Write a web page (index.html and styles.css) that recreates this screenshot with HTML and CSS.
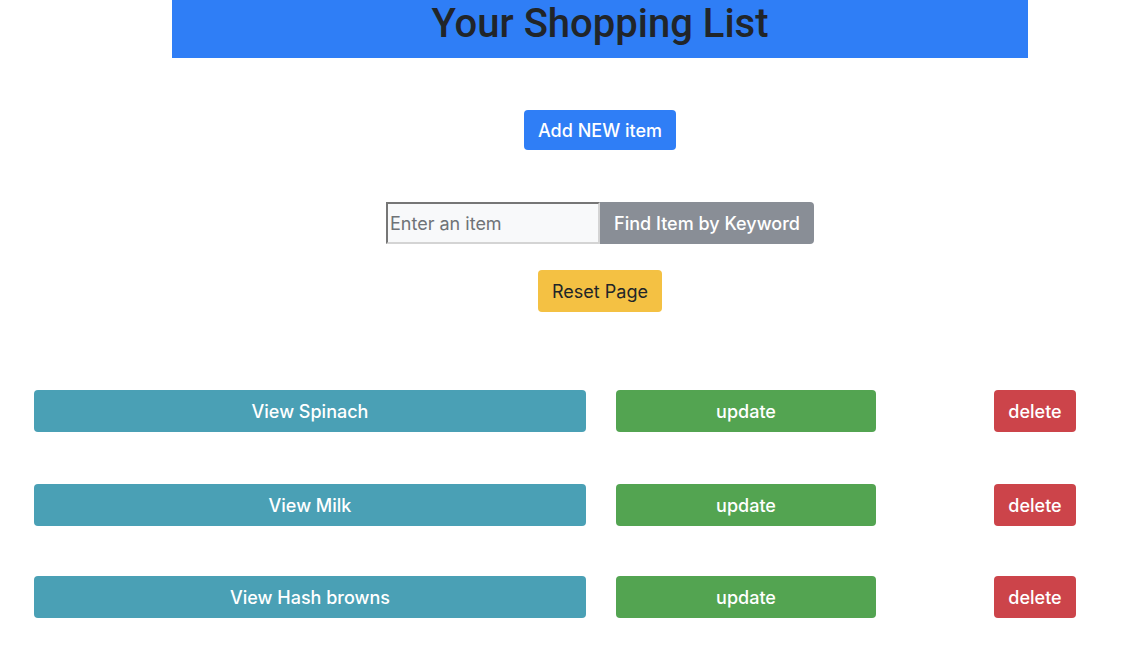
FILE: index.html
```html
<!DOCTYPE html>
<html lang="en">
<head>
<meta charset="utf-8">
<title>Your Shopping List</title>
<link rel="stylesheet" href="styles.css">
</head>
<body>
<div class="page">
  <header class="banner">
    <h1 class="title">Your Shopping List</h1>
  </header>

  <div class="controls">
    <button class="btn btn-primary btn-add">Add NEW item</button>
    <div class="search">
      <input class="search-input" type="text" placeholder="Enter an item">
      <button class="btn btn-secondary btn-find">Find Item by Keyword</button>
    </div>
    <button class="btn btn-warning btn-reset">Reset Page</button>
  </div>

  <div class="list">
    <div class="row">
      <button class="btn btn-info btn-view">View Spinach</button>
      <button class="btn btn-success btn-update">update</button>
      <button class="btn btn-danger btn-delete">delete</button>
    </div>
    <div class="row">
      <button class="btn btn-info btn-view">View Milk</button>
      <button class="btn btn-success btn-update">update</button>
      <button class="btn btn-danger btn-delete">delete</button>
    </div>
    <div class="row">
      <button class="btn btn-info btn-view">View Hash browns</button>
      <button class="btn btn-success btn-update">update</button>
      <button class="btn btn-danger btn-delete">delete</button>
    </div>
  </div>
</div>
</body>
</html>
```

FILE: styles.css
```css
html, body {
  margin: 0;
  padding: 0;
  background: #ffffff;
}

.page {
  width: 1122px;
  font-family: Inter, "Liberation Sans", Arial, sans-serif;
  color: #212529;
}

.banner {
  margin-left: 172px;
  width: 856px;
  height: 58px;
  background: #2f7ef6;
  display: flex;
  justify-content: center;
}

.title {
  margin: 0;
  font-family: Roboto, "Liberation Sans", Arial, sans-serif;
  font-size: 40px;
  font-weight: 500;
  line-height: 48px;
  color: #212529;
}

.btn {
  font-family: Inter, "Liberation Sans", Arial, sans-serif;
  font-size: 18px;
  font-weight: 500;
  color: #ffffff;
  border: none;
  border-radius: 4px;
  padding: 0 15px;
  height: 42px;
  display: inline-flex;
  align-items: center;
  justify-content: center;
  cursor: pointer;
  white-space: nowrap;
}

.btn-primary { background: #2f7ef6; }
.btn-secondary { background: #898e96; }
.btn-warning { background: #f4c143; color: #212529; font-weight: 400; }
.btn-info { background: #4aa0b5; }
.btn-success { background: #53a451; }
.btn-danger { background: #cc444a; }

.controls {
  display: flex;
  flex-direction: column;
  align-items: center;
  padding-top: 52px;
  padding-left: 78px;
}

.btn-add {
  height: 40px;
  width: 152px;
}

.search {
  display: flex;
  margin-top: 52px;
  height: 42px;
}

.search-input {
  box-sizing: border-box;
  width: 214px;
  height: 42px;
  margin: 0;
  padding: 0 2px;
  font-family: Inter, "Liberation Sans", Arial, sans-serif;
  font-size: 18px;
  color: #495057;
  background: #f8f9fa;
  border: 2px solid;
  border-color: #767676 #d4d4d4 #d4d4d4 #767676;
  border-radius: 0;
  outline: none;
}

.search-input::placeholder {
  color: #6f7377;
}

.btn-find {
  width: 214px;
  border-radius: 0 4px 4px 0;
}

.btn-reset {
  margin-top: 26px;
  width: 124px;
}

.list {
  display: flex;
  flex-direction: column;
  padding: 78px 0 0 34px;
}

.row {
  display: flex;
  align-items: center;
  margin-bottom: 52px;
}

.row + .row + .row {
  margin-top: -2px;
}

.btn-view { width: 552px; }

.btn-update {
  width: 260px;
  margin-left: 30px;
}

.btn-delete {
  width: 82px;
  margin-left: 118px;
}
```
